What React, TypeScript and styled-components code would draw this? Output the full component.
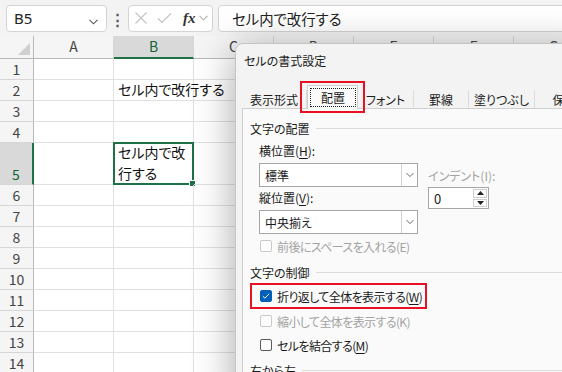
import styled, { createGlobalStyle } from "styled-components";

const JP = `"Noto Sans CJK JP", "Noto Sans", sans-serif`;
const GREEN = "#1e7145";

const GlobalStyle = createGlobalStyle`
  html, body { margin: 0; padding: 0; background: #fff; }
  body { font-family: ${JP}; font-feature-settings: "palt"; }
`;

const Screen = styled.div`
  position: relative;
  width: 562px;
  height: 372px;
  overflow: hidden;
  background: #fff;
`;

/* ---------- formula bar ---------- */

const TopBar = styled.div`
  height: 36px;
  background: #f3f3f3;
  display: flex;
  align-items: center;
  padding-left: 6px;
  box-sizing: border-box;
`;

const Field = styled.div<{ $w?: number }>`
  height: 27px;
  box-sizing: border-box;
  border: 1px solid #d4d4d4;
  border-radius: 4px;
  background: #fff;
  display: flex;
  align-items: center;
  ${(p) => (p.$w ? `width: ${p.$w}px; flex: none;` : "flex: 1; margin-right: -10px;")}
`;

const NameText = styled.span`
  flex: 1;
  padding-left: 7px;
  font-family: "Noto Sans", sans-serif;
  font-size: 15px;
  color: #222;
`;

const Dots = styled.div`
  width: 21px;
  text-align: center;
  font-size: 15px;
  font-weight: bold;
  color: #555;
`;

const FuncIcons = styled.div`
  display: flex;
  align-items: center;
  gap: 9px;
  padding-left: 5px;
`;

const Fx = styled.span`
  font-family: "Liberation Serif", serif;
  font-style: italic;
  font-weight: bold;
  font-size: 15px;
  color: #333;
  margin-left: 2px;
  margin-right: -6px;
`;

const FormulaText = styled.span`
  padding-left: 13px;
  font-size: 14.4px;
  color: #222;
`;

const Chevron = ({ color = "#555", w = 9 }: { color?: string; w?: number }) => (
  <svg width={w} height={6} viewBox="0 0 9 6">
    <polyline points="0.5,0.8 4.5,4.8 8.5,0.8" fill="none" stroke={color} strokeWidth="1.1" />
  </svg>
);

/* ---------- sheet ---------- */

const Sheet = styled.div`
  display: grid;
  grid-template-columns: 34px repeat(7, 80px);
  grid-template-rows: 23px repeat(4, 21px) 42px repeat(9, 21px);
`;

const HeadCell = styled.div<{ $sel?: boolean; $row?: boolean }>`
  box-sizing: border-box;
  background: ${(p) => (p.$sel ? "#d9d9d9" : "#f5f5f5")};
  color: ${(p) => (p.$sel ? "#0e6436" : "#444")};
  font-size: 14px;
  display: flex;
  justify-content: center;
  align-items: ${(p) => (p.$row ? "flex-end" : "center")};
  line-height: 20px;
  padding-bottom: ${(p) => (p.$row ? 0 : 2)}px;
  border-right: ${(p) =>
    p.$row ? (p.$sel ? `2px solid ${GREEN}` : "1px solid #b9b9b9") : "1px solid #d6d6d6"};
  border-bottom: ${(p) =>
    p.$row ? "1px solid #d6d6d6" : p.$sel ? `2px solid ${GREEN}` : "1px solid #b9b9b9"};
`;

const Corner = styled.div`
  box-sizing: border-box;
  background: #f5f5f5;
  border-right: 1px solid #b9b9b9;
  border-bottom: 1px solid #b9b9b9;
  display: flex;
  justify-content: flex-end;
  align-items: flex-end;
  padding: 0 3px 3px 0;
`;

const Cell = styled.div`
  position: relative;
  box-sizing: border-box;
  border-right: 1px solid #e1e1e1;
  border-bottom: 1px solid #e1e1e1;
  display: flex;
  align-items: flex-end;
  padding-left: 4px;
  font-size: 14px;
  line-height: 21px;
  color: #111;
  white-space: nowrap;
`;

const ActiveFrame = styled.div`
  position: absolute;
  left: -1px;
  top: -1px;
  right: -1px;
  bottom: -1px;
  border: 2px solid ${GREEN};
  pointer-events: none;
`;

const FillHandle = styled.div`
  position: absolute;
  right: -4px;
  bottom: -4px;
  width: 5px;
  height: 5px;
  background: ${GREEN};
  border: 1px solid #fff;
`;

/* ---------- dialog ---------- */

const Dialog = styled.div`
  position: absolute;
  left: 235px;
  top: 43px;
  width: 360px;
  height: 360px;
  box-sizing: border-box;
  background: #f3f3f3;
  border: 1px solid #c4c4c4;
  border-radius: 8px 0 0 0;
  box-shadow: 0 6px 40px rgba(0, 0, 0, 0.35);
  font-size: 12px;
  color: #1a1a1a;
  display: flex;
  flex-direction: column;
`;

const Title = styled.div`
  height: 34px;
  line-height: 34px;
  padding-left: 8px;
  font-size: 12px;
`;

const TabStrip = styled.div`
  margin-top: 7px;
  margin-left: 6px;
  display: flex;
  align-items: flex-end;
  height: 23px;
`;

const Tab = styled.div<{ $w: number; $active?: boolean }>`
  position: relative;
  width: ${(p) => p.$w}px;
  flex: none;
  box-sizing: border-box;
  height: ${(p) => (p.$active ? 24 : 18)}px;
  margin-bottom: ${(p) => (p.$active ? -1 : 0)}px;
  z-index: ${(p) => (p.$active ? 1 : 0)};
  background: ${(p) => (p.$active ? "#fafafa" : "transparent")};
  border: ${(p) => (p.$active ? "1px solid #cfcfcf" : "none")};
  border-bottom: none;
  border-right: ${(p) => (p.$active ? "1px solid #cfcfcf" : "1px solid #dcdcdc")};
  display: flex;
  align-items: stretch;
  padding: ${(p) => (p.$active ? "2px 1px 2px 2px" : "0")};
`;

const TabLabel = styled.div<{ $focus?: boolean }>`
  flex: 1;
  display: flex;
  align-items: center;
  justify-content: center;
  white-space: nowrap;
  border: ${(p) => (p.$focus ? "1px dotted #222" : "none")};
`;

const RedMark = styled.div`
  position: absolute;
  left: -8px;
  right: -8px;
  top: -5px;
  bottom: -4px;
  border: 2px solid #e81123;
  pointer-events: none;
`;

const Panel = styled.div`
  flex: 1;
  margin-left: 6px;
  background: #fafafa;
  border-top: 1px solid #cfcfcf;
  border-left: 1px solid #cfcfcf;
  padding-left: 7px;
  display: flex;
  flex-direction: column;
`;

const Group = styled.div<{ $mt: number }>`
  margin-top: ${(p) => p.$mt}px;
  height: 18px;
  display: flex;
  align-items: center;
  gap: 6px;
  &::after {
    content: "";
    flex: 1;
    height: 1px;
    background: #dcdcdc;
  }
`;

const AlignGrid = styled.div`
  margin-top: 5px;
  margin-left: 9px;
  display: grid;
  grid-template-columns: 159px 62px;
  column-gap: 10px;
`;

const Stack = styled.div<{ $mt?: number }>`
  display: flex;
  flex-direction: column;
  margin-top: ${(p) => p.$mt ?? 0}px;
`;

const Label = styled.div<{ $disabled?: boolean; $mt?: number }>`
  height: 18px;
  line-height: 18px;
  margin-top: ${(p) => p.$mt ?? 0}px;
  color: ${(p) => (p.$disabled ? "#a3a3a3" : "#1a1a1a")};
  white-space: nowrap;
  u { text-decoration-thickness: 1px; text-underline-offset: 2px; }
`;

const Select = styled.div<{ $mt: number }>`
  margin-top: ${(p) => p.$mt}px;
  height: 24px;
  box-sizing: border-box;
  border: 1px solid #a6a6a6;
  background: #fff;
  display: flex;
`;

const SelectText = styled.div`
  flex: 1;
  display: flex;
  align-items: center;
  padding-left: 5px;
`;

const SelectBtn = styled.div`
  width: 15px;
  border-left: 1px solid #d2d2d2;
  display: flex;
  align-items: center;
  justify-content: center;
`;

const Spin = styled.div`
  margin-top: 2px;
  width: 61px;
  height: 22px;
  box-sizing: border-box;
  border: 1px solid #a6a6a6;
  background: #fff;
  display: flex;
`;

const SpinText = styled.div`
  flex: 1;
  padding-left: 5px;
  display: flex;
  align-items: center;
  font-size: 13px;
`;

const SpinBtns = styled.div`
  width: 14px;
  margin: 1px;
  display: flex;
  flex-direction: column;
  gap: 1px;
`;

const SpinBtn = styled.div`
  flex: 1;
  border: 1px solid #cfcfcf;
  display: flex;
  align-items: center;
  justify-content: center;
`;

const CheckRow = styled.div<{ $mt: number; $disabled?: boolean }>`
  margin-top: ${(p) => p.$mt}px;
  margin-left: 10px;
  height: 18px;
  display: flex;
  align-items: center;
  gap: 5px;
  letter-spacing: -0.6px;
  color: ${(p) => (p.$disabled ? "#a3a3a3" : "#1a1a1a")};
  white-space: nowrap;
  u { text-decoration-thickness: 1px; text-underline-offset: 2px; }
`;

const Box = styled.div<{ $state: "off" | "on" | "disabled" }>`
  width: 12px;
  height: 12px;
  flex: none;
  box-sizing: border-box;
  border-radius: 2px;
  border: 1px solid
    ${(p) => (p.$state === "on" ? "#005fb8" : p.$state === "disabled" ? "#c9c9c9" : "#5a5a5a")};
  background: ${(p) => (p.$state === "on" ? "#005fb8" : "#fdfdfd")};
  display: flex;
  align-items: center;
  justify-content: center;
`;

const Highlight = styled.div`
  margin-top: 2px;
  width: 177px;
  height: 26px;
  box-sizing: border-box;
  border: 2px solid #e81123;
  display: flex;
  align-items: center;
  & > div { margin-top: 0; margin-left: 8px; }
`;

const cols = ["A", "B", "C", "D", "E", "F", "G"];

const cellText: Record<string, React.ReactNode> = {
  "2B": "セル内で改行する",
  "5B": (
    <>
      セル内で改
      <br />
      行する
    </>
  ),
};

export default function App() {
  return (
    <Screen>
      <GlobalStyle />
      <TopBar>
        <Field $w={101}>
          <NameText>B5</NameText>
          <span style={{ paddingRight: 8 }}>
            <Chevron />
          </span>
        </Field>
        <Dots>⋮</Dots>
        <Field $w={85}>
          <FuncIcons>
            <svg width="14" height="14" viewBox="0 0 14 14">
              <path d="M1.5 1.5 L12.5 12.5 M12.5 1.5 L1.5 12.5" stroke="#c4c4c4" strokeWidth="1.2" />
            </svg>
            <svg width="15" height="14" viewBox="0 0 15 14">
              <polyline points="1,7.5 5,11.5 14,2.5" fill="none" stroke="#c4c4c4" strokeWidth="1.2" />
            </svg>
            <Fx>fx</Fx>
            <Chevron color="#b0b0b0" />
          </FuncIcons>
        </Field>
        <span style={{ width: 5 }} />
        <Field>
          <FormulaText>セル内で改行する</FormulaText>
        </Field>
      </TopBar>

      <Sheet>
        <Corner>
          <svg width="12" height="12" viewBox="0 0 12 12">
            <polygon points="12,0 12,12 0,12" fill="#cfcfcf" />
          </svg>
        </Corner>
        {cols.map((c) => (
          <HeadCell key={c} $sel={c === "B"}>
            {c}
          </HeadCell>
        ))}
        {Array.from({ length: 14 }, (_, i) => i + 1).map((r) => [
          <HeadCell key={`h${r}`} $row $sel={r === 5}>
            {r}
          </HeadCell>,
          ...cols.map((c) => (
            <Cell key={`${r}${c}`}>
              {cellText[`${r}${c}`] && <div>{cellText[`${r}${c}`]}</div>}
              {r === 5 && c === "B" && (
                <ActiveFrame>
                  <FillHandle />
                </ActiveFrame>
              )}
            </Cell>
          )),
        ])}
      </Sheet>

      <Dialog>
        <Title>セルの書式設定</Title>
        <TabStrip>
          <Tab $w={65}>
            <TabLabel>表示形式</TabLabel>
          </Tab>
          <Tab $w={51} $active>
            <TabLabel $focus>配置</TabLabel>
            <RedMark />
          </Tab>
          <Tab $w={56}>
            <TabLabel>フォント</TabLabel>
          </Tab>
          <Tab $w={55}>
            <TabLabel>罫線</TabLabel>
          </Tab>
          <Tab $w={66}>
            <TabLabel>塗りつぶし</TabLabel>
          </Tab>
          <Tab $w={60}>
            <TabLabel>保護</TabLabel>
          </Tab>
        </TabStrip>
        <Panel>
          <Group $mt={10}>文字の配置</Group>
          <AlignGrid>
            <Stack>
              <Label>
                横位置(<u>H</u>):
              </Label>
              <Select $mt={3}>
                <SelectText>標準</SelectText>
                <SelectBtn>
                  <Chevron color="#666" w={8} />
                </SelectBtn>
              </Select>
              <Label $mt={2}>
                縦位置(<u>V</u>):
              </Label>
              <Select $mt={3}>
                <SelectText>中央揃え</SelectText>
                <SelectBtn>
                  <Chevron color="#666" w={8} />
                </SelectBtn>
              </Select>
            </Stack>
            <Stack $mt={25}>
              <Label $disabled>インデント(I):</Label>
              <Spin>
                <SpinText>0</SpinText>
                <SpinBtns>
                  <SpinBtn>
                    <svg width="7" height="4" viewBox="0 0 7 4">
                      <polygon points="3.5,0 7,4 0,4" fill="#222" />
                    </svg>
                  </SpinBtn>
                  <SpinBtn>
                    <svg width="7" height="4" viewBox="0 0 7 4">
                      <polygon points="0,0 7,0 3.5,4" fill="#222" />
                    </svg>
                  </SpinBtn>
                </SpinBtns>
              </Spin>
            </Stack>
          </AlignGrid>
          <CheckRow $mt={3} $disabled>
            <Box $state="disabled" />
            <span>前後にスペースを入れる(E)</span>
          </CheckRow>
          <Group $mt={8}>文字の制御</Group>
          <Highlight>
            <CheckRow $mt={0}>
              <Box $state="on">
                <svg width="8" height="6" viewBox="0 0 8 6">
                  <polyline points="0.8,3.2 2.9,5.2 7.2,0.8" fill="none" stroke="#fff" strokeWidth="1" />
                </svg>
              </Box>
              <span>
                折り返して全体を表示する(<u>W</u>)
              </span>
            </CheckRow>
          </Highlight>
          <CheckRow $mt={3} $disabled>
            <Box $state="disabled" />
            <span>縮小して全体を表示する(K)</span>
          </CheckRow>
          <CheckRow $mt={6}>
            <Box $state="off" />
            <span>
              セルを結合する(<u>M</u>)
            </span>
          </CheckRow>
          <Group $mt={7}>右から左</Group>
        </Panel>
      </Dialog>
    </Screen>
  );
}
